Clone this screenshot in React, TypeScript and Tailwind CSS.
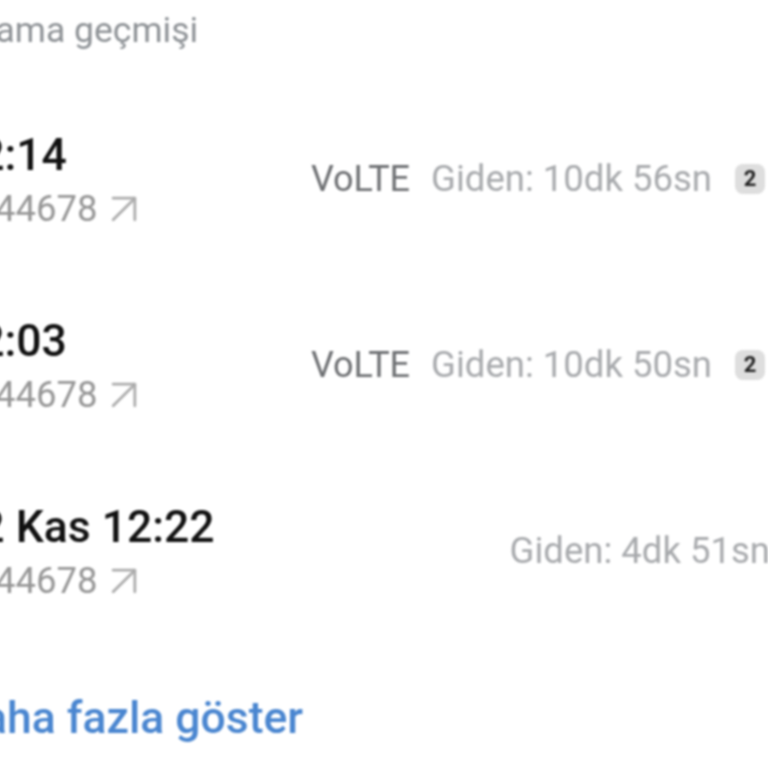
import { ArrowUpRight } from 'lucide-react';

const rows = [
  { time: '12:14', detail: 'Giden: 10dk 56sn', volte: true },
  { time: '12:03', detail: 'Giden: 10dk 50sn', volte: true },
  { time: '12 Kas 12:22', detail: 'Giden: 4dk 51sn', volte: false },
];

export default function App() {
  return (
    <div className="w-[768px] h-[768px] overflow-hidden bg-white font-['Roboto',sans-serif]">
      <div className="w-[816px] -ml-[46px] flex flex-col blur-[1px]">
        <div className="pt-[10px] pl-[7px] h-[125px] text-[35.5px] leading-[40px] text-[#8e9296]">Arama geçmişi</div>
        {rows.map((row) => (
          <div key={row.time} className="h-[186px] flex justify-between items-start">
            <div className="flex flex-col">
              <div className="text-[44.5px] leading-[60px] font-medium text-[#111] whitespace-nowrap">{row.time}</div>
              <div className="flex items-center h-[48px] text-[36.5px] text-[#969696]">
                <span>0544678</span>
                <ArrowUpRight className="w-[52px] h-[52px] text-[#acacac]" strokeWidth={1.3} />
              </div>
            </div>
            <div className="flex items-center gap-[21px] mt-[30px] text-[36.5px] leading-[48px] whitespace-nowrap">
              {row.volte && <span className="text-[36px] text-[#6e7073]">VoLTE</span>}
              <span className="text-[#a8aaad]">{row.detail}</span>
              {row.volte && (
                <span className="ml-[2px] mr-[5px] w-[30px] h-[30px] rounded-lg bg-[#dedede] flex items-center justify-center text-[22px] font-bold text-[#222]">
                  2
                </span>
              )}
            </div>
          </div>
        ))}
        <div className="mt-[10px] text-[44.5px] leading-[50px] font-medium text-[#4a86d0]">Daha fazla göster</div>
      </div>
    </div>
  );
}
